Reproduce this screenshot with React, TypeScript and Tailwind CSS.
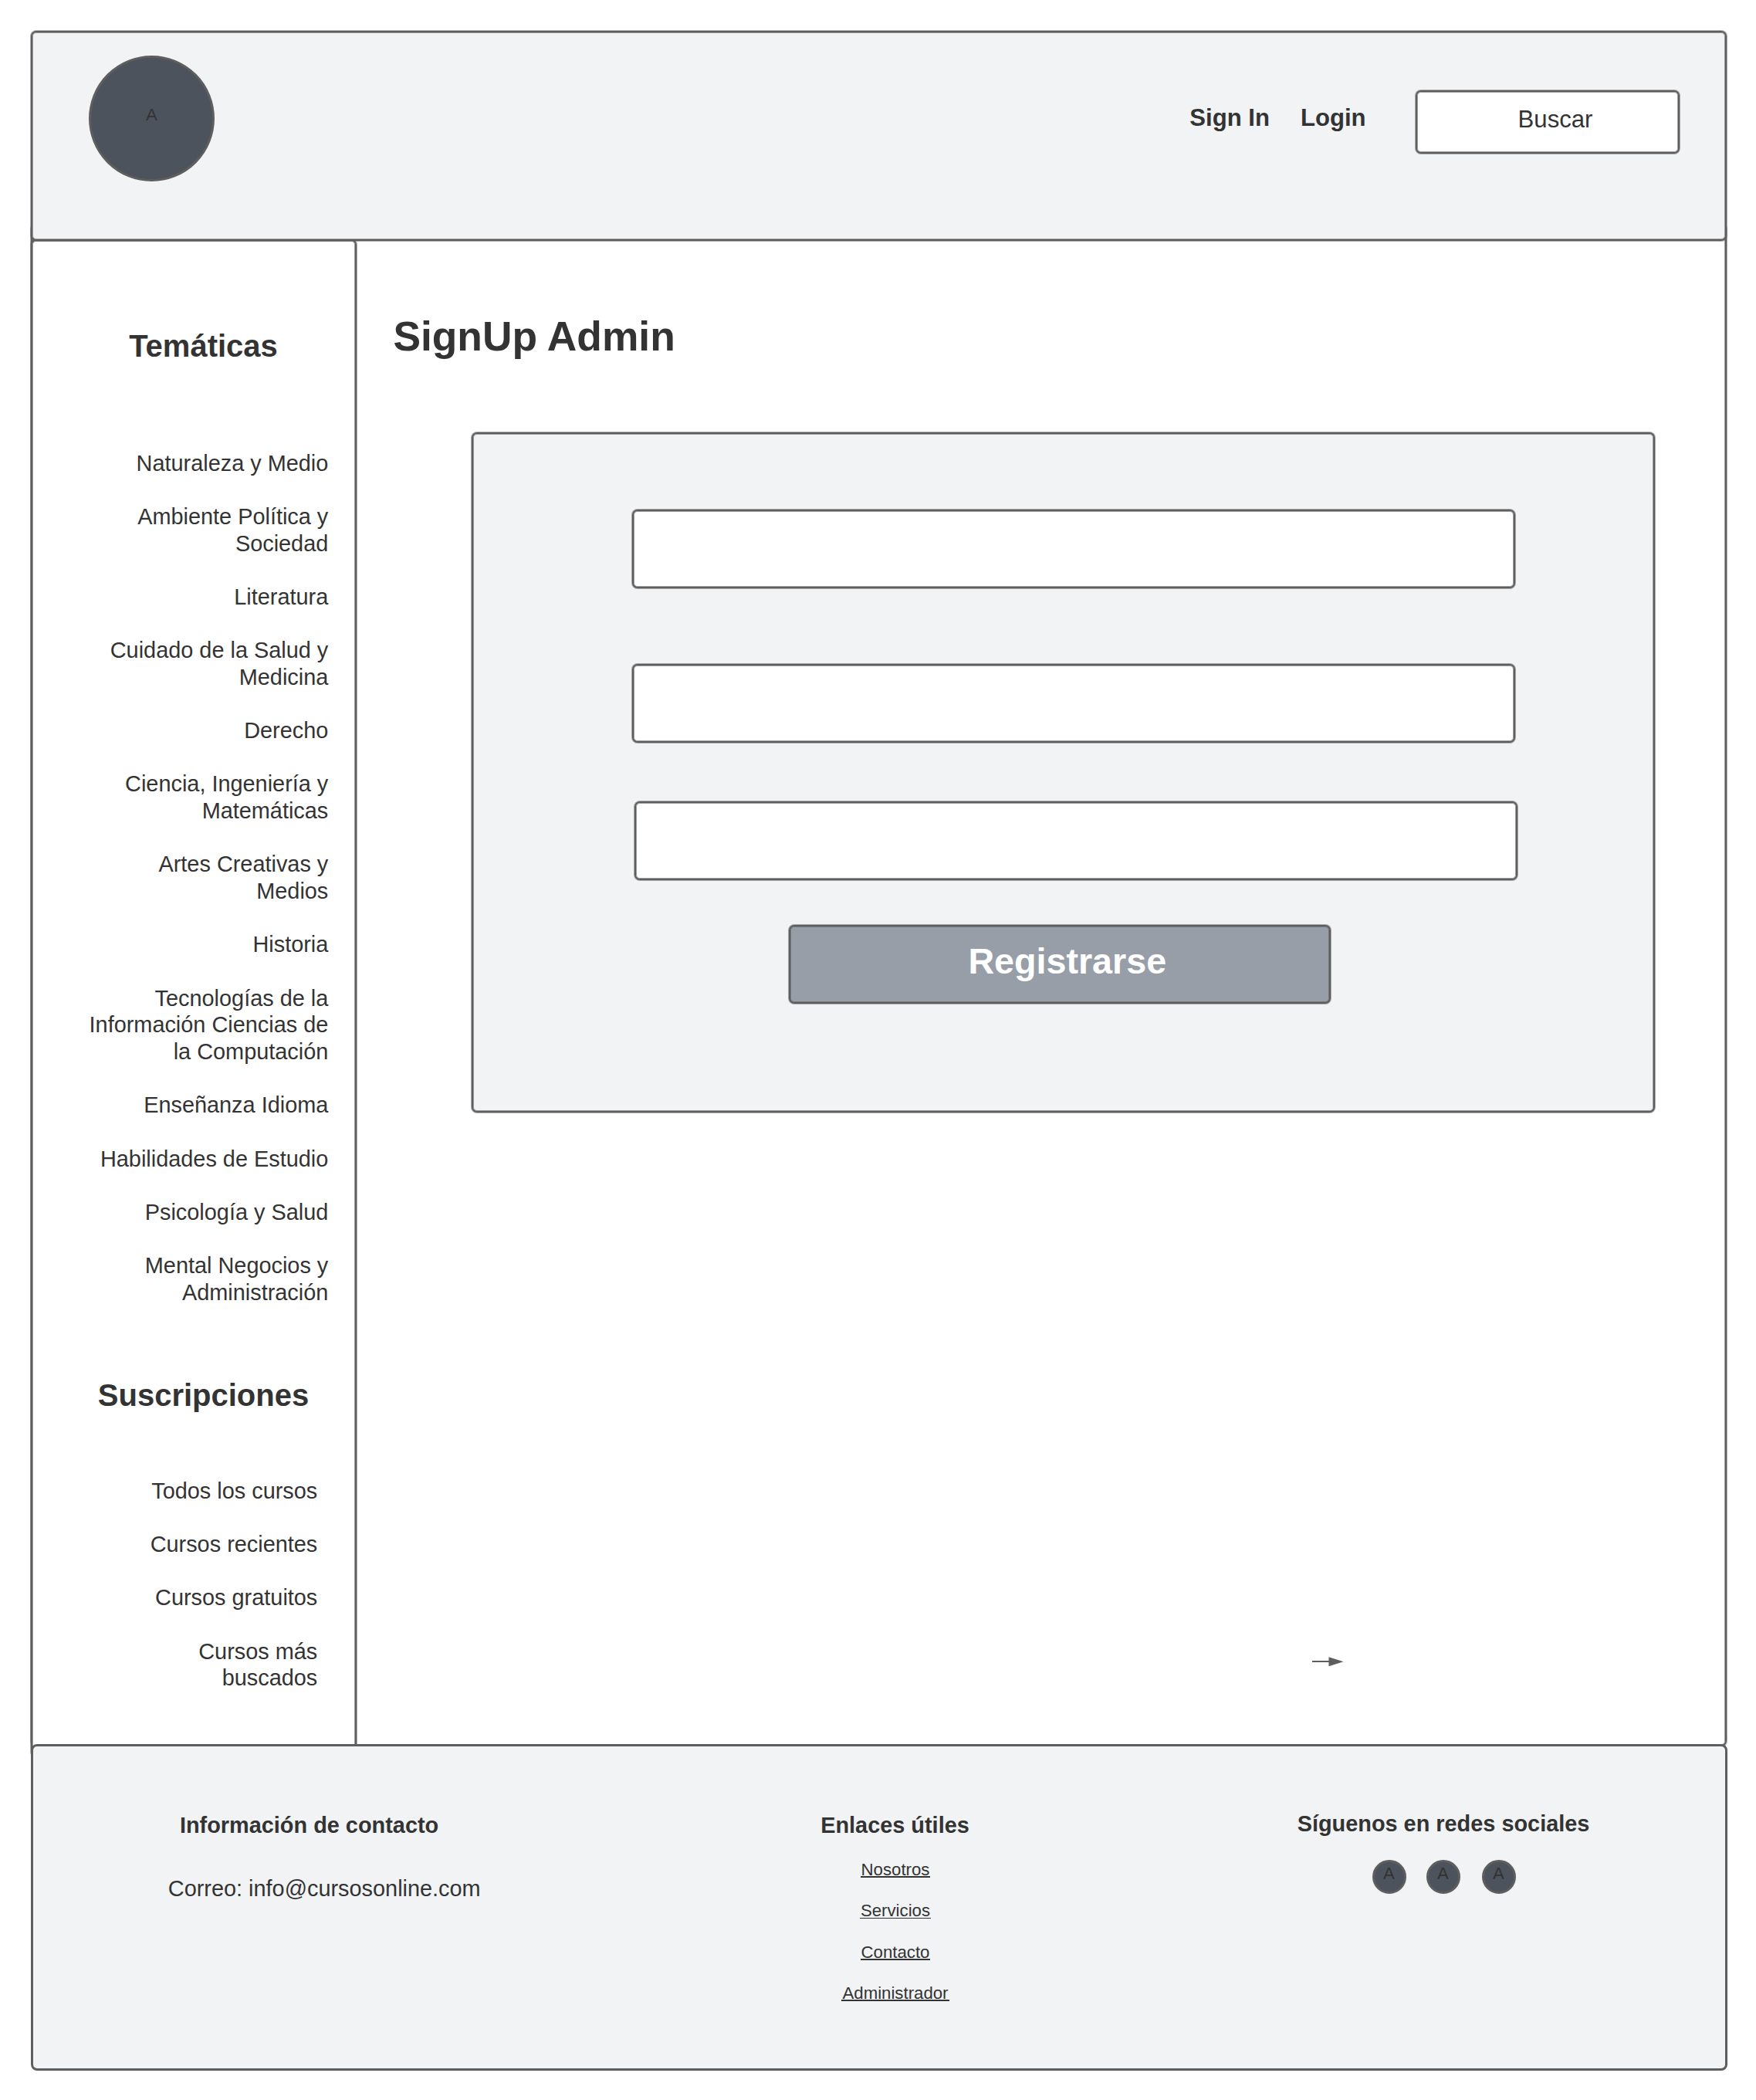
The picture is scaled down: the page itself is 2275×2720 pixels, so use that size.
import React from "react";

const topics: string[] = [
  "Naturaleza y Medio",
  "Ambiente Política y\nSociedad",
  "Literatura",
  "Cuidado de la Salud y\nMedicina",
  "Derecho",
  "Ciencia, Ingeniería y\nMatemáticas",
  "Artes Creativas y\nMedios",
  "Historia",
  "Tecnologías de la\nInformación Ciencias de\nla Computación",
  "Enseñanza Idioma",
  "Habilidades de Estudio",
  "Psicología y Salud",
  "Mental Negocios y\nAdministración",
];

const subscriptions: string[] = [
  "Todos los cursos",
  "Cursos recientes",
  "Cursos gratuitos",
  "Cursos más\nbuscados",
];

// Two-pixel stroke with a soft half-tone pixel on either side.
const stroke =
  "border-2 border-[#5e5e5e] shadow-[0_0_0_1px_#5e5e5e80,inset_0_0_0_1px_#5e5e5e99]";

function SideList({ items, className }: { items: string[]; className: string }) {
  return (
    <ul
      className={
        "flex flex-col gap-[34.667px] text-right text-[28.89px] leading-[34.667px] whitespace-pre-line " +
        className
      }
    >
      {items.map((item) => (
        <li key={item}>{item}</li>
      ))}
    </ul>
  );
}

function Header() {
  return (
    <header className={"relative z-10 flex h-[272px] items-start rounded-[7px] bg-[#f2f3f5] " + stroke}>
      <div className="mt-[30px] ml-[73px] size-[163px] rounded-full border-3 border-[#5e5e5e] bg-[#4c535d] pt-[61px] text-center text-[22.22px] leading-[26.67px]">
        A
      </div>
      <nav className="mt-[92.3px] mr-[64.4px] ml-auto flex gap-[40px] text-[31.11px] leading-[37.33px] font-bold">
        <a>Sign In</a>
        <a>Login</a>
      </nav>
      <div
        className={
          "mt-[75px] mr-[59px] h-[82px] w-[342px] rounded-[7px] bg-white pt-[16.5px] pl-[20px] text-center text-[31.11px] leading-[37.33px] " +
          stroke
        }
      >
        Buscar
      </div>
    </header>
  );
}

function Sidebar() {
  return (
    <aside className={"-ml-[2px] h-[1966px] w-[422px] shrink-0 rounded-[7px] bg-white " + stroke}>
      <h2 className="mt-[112px] pl-[25px] text-center text-[40px] leading-[48px] font-bold">Temáticas</h2>
      <SideList items={topics} className="mt-[110.5px] pr-[34.7px]" />
      <h2 className="mt-[91.5px] pl-[25px] text-center text-[40px] leading-[48px] font-bold">Suscripciones</h2>
      <SideList items={subscriptions} className="mt-[82.4px] pr-[48.7px]" />
    </aside>
  );
}

function SignUpForm() {
  return (
    <form
      className={
        "mt-[92.5px] ml-[149px] flex h-[881px] w-[1533px] flex-col items-start rounded-[7px] bg-[#f2f3f5] " +
        stroke
      }
    >
      <input className={"mt-[98px] ml-[206px] h-[102px] w-[1144px] shrink-0 rounded-[7px] bg-white " + stroke} />
      <input className={"mt-[98px] ml-[206px] h-[102px] w-[1144px] shrink-0 rounded-[7px] bg-white " + stroke} />
      <input className={"mt-[76px] ml-[209px] h-[102px] w-[1144px] shrink-0 rounded-[7px] bg-white " + stroke} />
      <button
        type="button"
        className={
          "mt-[58px] ml-[409px] flex h-[102px] w-[702px] shrink-0 items-start justify-center rounded-[7px] bg-[#979ea8] pt-[17px] pl-[19.5px] text-[46.67px] leading-[56px] font-bold text-white " +
          stroke
        }
      >
        Registrarse
      </button>
    </form>
  );
}

function FooterLink({ children, thin = false }: { children: string; thin?: boolean }) {
  return (
    <li className="h-[53.33px]">
      <a
        className={
          "mx-auto block w-fit border-[#333333] px-px leading-[17px] " + (thin ? "border-b pb-px" : "border-b-2")
        }
      >
        {children}
      </a>
    </li>
  );
}

function SocialDot({ className = "" }: { className?: string }) {
  return (
    <div
      className={
        "size-[44px] rounded-full border-3 border-[#5e5e5e] bg-[#4c535d] pt-[2px] text-center text-[22.22px] leading-[26.67px] " +
        className
      }
    >
      A
    </div>
  );
}

function Footer() {
  return (
    <footer className="relative z-10 -mt-[3px] flex h-[423px] w-[2198px] rounded-[8px] border-3 border-[#5e5e5e] bg-[#f2f3f5] text-[28.89px] leading-[34.667px]">
      <div className="w-[900px] pt-[84.67px] pl-[174.8px]">
        <h3 className="pl-[15.1px] font-bold">Información de contacto</h3>
        <p className="mt-[47.33px]">Correo: info@cursosonline.com</p>
      </div>
      <div className="w-[433px] pt-[84.67px] text-center">
        <h3 className="font-bold">Enlaces útiles</h3>
        <ul className="mt-[31.67px] pl-px text-[22.22px]">
          <FooterLink>Nosotros</FooterLink>
          <FooterLink thin>Servicios</FooterLink>
          <FooterLink>Contacto</FooterLink>
          <FooterLink>Administrador</FooterLink>
        </ul>
      </div>
      <div className="flex grow flex-col items-center pt-[82.67px] pl-[129px]">
        <h3 className="font-bold">Síguenos en redes sociales</h3>
        <div className="mt-[29.66px] flex pl-px">
          <SocialDot />
          <SocialDot className="ml-[26px]" />
          <SocialDot className="ml-[28px]" />
        </div>
      </div>
    </footer>
  );
}

export default function App() {
  return (
    <div className="h-[2720px] w-[2275px] overflow-hidden bg-white pt-[40px] pl-[40px] font-['Liberation_Sans',Arial,sans-serif] text-[#333333]">
      <div className="w-[2197px]">
        <Header />
        <main className={"-mt-[22px] flex h-[1972px] rounded-[7px] pt-[18px] " + stroke}>
          <Sidebar />
          <section className="grow">
            <h1 className="mt-[93.5px] ml-[47.4px] text-[53.33px] leading-[64px] font-bold">SignUp Admin</h1>
            <SignUpForm />
            <svg className="mt-[705px] ml-[1238px]" width="42" height="13" viewBox="0 0 42 13" fill="#5e5e5e">
              <rect x="0" y="5" width="22" height="2" />
              <path d="M21.5 0.2L40.5 6.2L21.5 12.3Z" />
            </svg>
          </section>
        </main>
        <Footer />
      </div>
    </div>
  );
}
